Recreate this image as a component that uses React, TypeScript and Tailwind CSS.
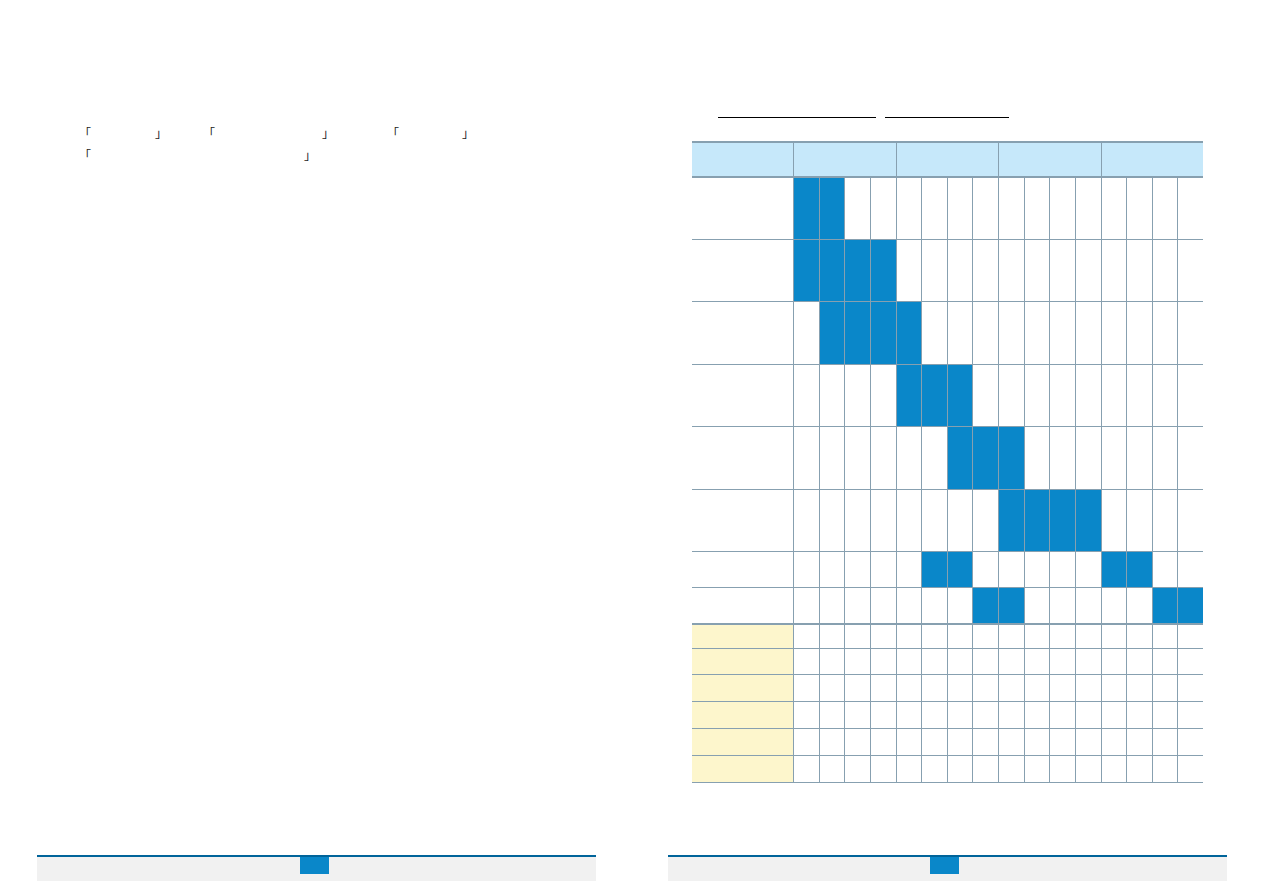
const line = "border-[#87a0b0]";

type Row = { h: string; fill: number[]; last?: boolean };

const rows: Row[] = [
  { h: "h-[62px]", fill: [1, 2] },
  { h: "h-[62px]", fill: [1, 2, 3, 4] },
  { h: "h-[63px]", fill: [2, 3, 4, 5] },
  { h: "h-[62px]", fill: [5, 6, 7] },
  { h: "h-[63px]", fill: [7, 8, 9] },
  { h: "h-[62px]", fill: [9, 10, 11, 12] },
  { h: "h-[36px]", fill: [6, 7, 13, 14] },
  { h: "h-[37px]", fill: [8, 9, 15, 16], last: true },
];

const extraRows = ["h-[24px]", "h-[26px]", "h-[27px]", "h-[27px]", "h-[27px]", "h-[27px]"];

const weeks = Array.from({ length: 16 }, (_, i) => i + 1);

function Footer({ offset }: { offset: string }) {
  return (
    <div className="ml-[37px] mr-[35px] mt-auto mb-[12px] h-[26px] border-t-2 border-[#00649a] bg-[#f1f1f1]">
      <div className={`${offset} h-[17px] w-[29px] bg-[#0a87c9]`} />
    </div>
  );
}

function Quote({ w }: { w: string }) {
  return (
    <>
      <span>「</span>
      <span className={`inline-block ${w}`} />
      <span>」</span>
    </>
  );
}

function LeftPage() {
  return (
    <div className="flex h-full w-[631px] flex-col">
      <div className="whitespace-nowrap pl-[79px] pt-[122px] text-[12px] leading-[22px] text-[#222]">
        <div>
          <Quote w="w-[64px]" />
          <span className="inline-block w-[36px]" />
          <Quote w="w-[107px]" />
          <span className="inline-block w-[53px]" />
          <Quote w="w-[63px]" />
        </div>
        <div>
          <Quote w="w-[213px]" />
        </div>
      </div>
      <Footer offset="ml-[263px]" />
    </div>
  );
}

function Schedule() {
  return (
    <div className={`ml-[61px] mt-[23px] w-[511px] border-t-2 ${line}`}>
      <div className={`grid h-[35px] grid-cols-[101px_repeat(4,minmax(0,1fr))] border-b-2 bg-[#c6e8fa] ${line}`}>
        <div />
        {[0, 1, 2, 3].map((m) => (
          <div key={m} className={`border-l ${line}`} />
        ))}
      </div>
      {rows.map((r, i) => (
        <div
          key={i}
          className={`grid ${r.h} grid-cols-[101px_repeat(16,minmax(0,1fr))] ${r.last ? "border-b-2" : "border-b"} ${line}`}
        >
          <div />
          {weeks.map((w) => (
            <div key={w} className={`border-l ${line} ${r.fill.includes(w) ? "bg-[#0a87c9]" : ""}`} />
          ))}
        </div>
      ))}
      {extraRows.map((h, i) => (
        <div key={i} className={`grid ${h} grid-cols-[101px_repeat(16,minmax(0,1fr))] border-b ${line}`}>
          <div className="bg-[#fdf6cc]" />
          {weeks.map((w) => (
            <div key={w} className={`border-l ${line}`} />
          ))}
        </div>
      ))}
    </div>
  );
}

function RightPage() {
  return (
    <div className="flex h-full w-[631px] flex-col">
      <div className="flex gap-[9px] pl-[87px] pt-[101px]">
        <span className="h-[17px] w-[158px] border-b border-black" />
        <span className="h-[17px] w-[124px] border-b border-black" />
      </div>
      <Schedule />
      <Footer offset="ml-[262px]" />
    </div>
  );
}

export default function App() {
  return (
    <div className="flex h-[893px] w-[1262px] bg-white font-['Noto_Sans_CJK_JP','Noto_Sans',sans-serif]">
      <LeftPage />
      <RightPage />
    </div>
  );
}
